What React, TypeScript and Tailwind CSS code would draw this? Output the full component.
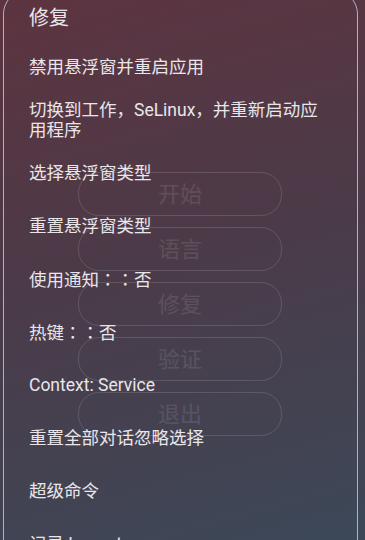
import React from 'react';

const font = { fontFamily: 'Roboto, "Noto Sans CJK SC", sans-serif' };
const tcFont = { fontFamily: '"Noto Sans CJK TC", sans-serif' };

const backButtons = ['开始', '语言', '修复', '验证', '退出'];

// [text before colons, has centered colons, text after]
const menuItems: { label: string; value?: string }[] = [
  { label: '禁用悬浮窗并重启应用' },
  { label: '切换到工作，SeLinux，并重新启动应用程序' },
  { label: '选择悬浮窗类型' },
  { label: '重置悬浮窗类型' },
  { label: '使用通知', value: '否' },
  { label: '热键', value: '否' },
  { label: 'Context: Service' },
  { label: '重置全部对话忽略选择' },
  { label: '超级命令' },
  { label: '记录 Logcat' },
];

const App: React.FC = () => {
  return (
    <div
      className="relative w-[365px] h-[540px] overflow-hidden bg-[linear-gradient(165deg,#5d3440_0%,#4c3a48_45%,#3c4858_100%)]"
      style={font}
    >
      {/* App screen behind the menu */}
      <div className="flex flex-col items-center gap-[11px] pt-[172px] pr-[5px]">
        {backButtons.map((b) => (
          <div
            key={b}
            className="w-[204px] h-[44px] rounded-[21px] border-[1.5px] border-white/[0.13] flex items-center justify-center text-[22px] text-white/10"
          >
            {b}
          </div>
        ))}
      </div>

      {/* Overlay menu */}
      <div className="absolute left-[3px] top-[-10px] w-[355px] h-[600px] rounded-[24px] border-[1.5px] border-[#aeb0cc] text-[#e9e6ea]">
        <div className="pl-[25px] pr-[25px] pt-[15px] pb-[11px] text-[20px] leading-[24px]">修复</div>
        <div className="flex flex-col">
          {menuItems.map((item) => (
            <div key={item.label} className="h-[53px] flex items-center pl-[25px] pr-[25px] text-[17.5px] leading-[19.5px]">
              <span>
                {item.label}
                {item.value && (
                  <>
                    <span style={tcFont}>：：</span>
                    {item.value}
                  </>
                )}
              </span>
            </div>
          ))}
        </div>
      </div>
    </div>
  );
};

export default App;
